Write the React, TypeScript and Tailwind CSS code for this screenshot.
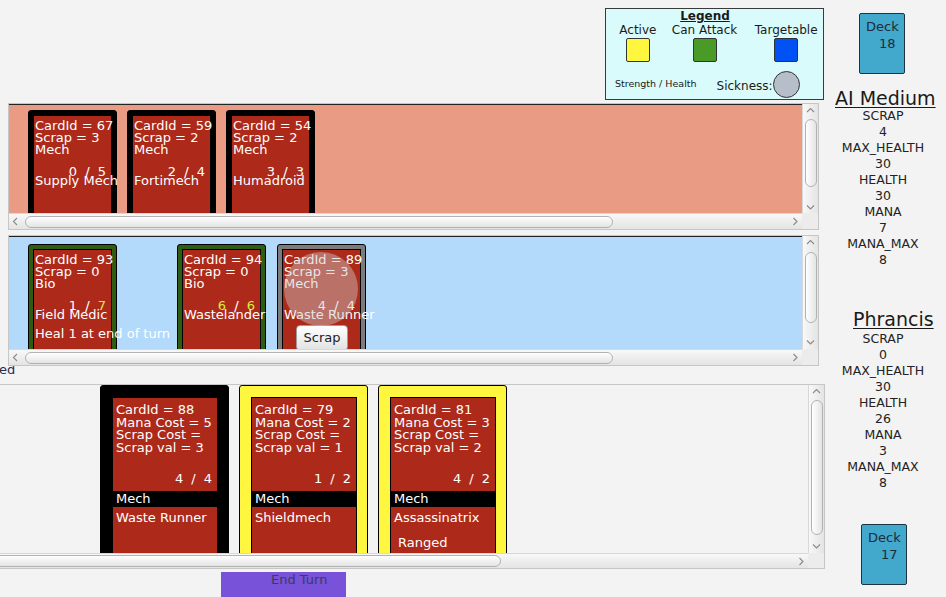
import React from 'react';

type Dir = 'up' | 'down' | 'left' | 'right';

// small gray chevrons used by the scrollbars
const Chevron = ({ dir }: { dir: Dir }) => {
  const vertical = dir === 'up' || dir === 'down';
  const d = {
    up: 'M1 5 L4.5 1.5 L8 5',
    down: 'M1 1.5 L4.5 5 L8 1.5',
    left: 'M5 1 L1.5 4.5 L5 8',
    right: 'M1.5 1 L5 4.5 L1.5 8',
  }[dir];
  return (
    <svg width={vertical ? 9 : 7} height={vertical ? 7 : 9} viewBox={vertical ? '0 0 9 7' : '0 0 7 9'}>
      <path d={d} fill="none" stroke="#8a8a8a" strokeWidth="1.1" />
    </svg>
  );
};

const HScroll = ({ thumb, left = true }: { thumb: string; left?: boolean }) => (
  <div className="flex h-full items-center bg-linear-to-b from-[#f8f8f8] to-[#e4e4e4] border-t border-[#d8d8d8]">
    {left && (
      <div className="w-[13px] shrink-0 flex justify-center">
        <Chevron dir="left" />
      </div>
    )}
    <div className={`h-[12px] shrink-0 rounded-[6px] border border-[#b2b2b2] bg-linear-to-b from-white to-[#e4e4e4] ${thumb}`} />
    <div className="ml-auto w-[14px] shrink-0 flex justify-center">
      <Chevron dir="right" />
    </div>
  </div>
);

const VScroll = ({ thumb, cap }: { thumb: string; cap: string }) => (
  <div className="flex flex-col items-center w-[16px] h-full bg-linear-to-r from-[#f8f8f8] to-[#e4e4e4] border-l border-[#d8d8d8]">
    <div className={`${cap} w-full flex items-center justify-center`}>
      <Chevron dir="up" />
    </div>
    <div className={`w-[12px] rounded-[6px] border border-[#b2b2b2] bg-linear-to-r from-white to-[#e4e4e4] ${thumb}`} />
    <div className={`mt-auto ${cap} w-full flex items-center justify-center`}>
      <Chevron dir="down" />
    </div>
  </div>
);

type BoardCardProps = {
  id: number;
  scrap: number;
  kind: string;
  atk: number;
  hp: number;
  name: string;
  frame: string;
  atkClass?: string;
  hpClass?: string;
  note?: string;
  scrapButton?: boolean;
  faded?: boolean;
  className?: string;
};

const BoardCard = (p: BoardCardProps) => (
  <div className={`relative shrink-0 w-[89px] h-[125px] rounded-[3px] border border-black p-[4px] ${p.frame} ${p.className ?? ''}`}>
    <div className="h-full border border-black bg-[#ad2a1a] pl-[1px] pt-[4px] text-white text-[13px] leading-[12px] whitespace-nowrap">
      <div>CardId = {p.id}</div>
      <div>Scrap = {p.scrap}</div>
      <div>{p.kind}</div>
      <div className="mt-[10px] h-[12px] flex justify-end gap-[8px] pr-[5px]">
        <span className={p.atkClass}>{p.atk}</span>
        <span className="text-[14px]">/</span>
        <span className={p.hpClass}>{p.hp}</span>
      </div>
      <div className="-mt-[3px]">{p.name}</div>
      {p.note && <div className="mt-[7px]">{p.note}</div>}
      {p.scrapButton && (
        <button className="block ml-[12px] mt-[4px] w-[52px] h-[26px] rounded-[4px] border border-[#9c9c9c] bg-linear-to-b from-white to-[#e2e2e2] text-[#222] text-[13px] leading-[24px] text-center">
          Scrap
        </button>
      )}
    </div>
    {p.faded && (
      <div className="absolute left-[6px] top-[7px] w-[74px] h-[74px] rounded-full bg-[rgba(200,200,200,0.45)] pointer-events-none" />
    )}
  </div>
);

type HandCardProps = {
  id: number;
  mana: number;
  scrapVal: number;
  atk: number;
  hp: number;
  kind: string;
  name: string;
  note?: string;
  frame: string;
};

const HandCard = (c: HandCardProps) => (
  <div className={`shrink-0 w-[129px] h-[200px] rounded-[3px] border border-black pt-[11px] pl-[11px] ${c.frame}`}>
    <div className="w-[106px] border border-black bg-black text-white text-[13px] leading-[12.5px] whitespace-nowrap">
      <div className="h-[93px] bg-[#ad2a1a] pl-[3px] pt-[6px]">
        <div>CardId = {c.id}</div>
        <div>Mana Cost = {c.mana}</div>
        <div>Scrap Cost =</div>
        <div>Scrap val = {c.scrapVal}</div>
        <div className="mt-[19px] flex justify-end gap-[8px] pr-[5px]">
          <span>{c.atk}</span>
          <span>/</span>
          <span>{c.hp}</span>
        </div>
      </div>
      <div className="h-[16px] leading-[16px] pl-[3px]">{c.kind}</div>
      <div className="h-[80px] bg-[#ad2a1a] pl-[3px] pt-[3px] leading-[16px]">
        <div>{c.name}</div>
        {c.note && <div className="mt-[9px] pl-[4px]">{c.note}</div>}
      </div>
    </div>
  </div>
);

const Deck = ({ count, className }: { count: number; className: string }) => (
  <div className={`w-[46px] h-[61px] rounded-[2px] border border-[#1d3440] bg-[#42a8cc] pt-[5px] pl-[6px] text-[13px] leading-[16.5px] text-[#1e2c3a] ${className}`}>
    <div>Deck</div>
    <div className="pl-[13px]">{count}</div>
  </div>
);

const Stats = ({ rows, className }: { rows: [string, number][]; className: string }) => (
  <div className={`w-[106px] text-center text-[12.5px] leading-[16px] text-[#222] ${className}`}>
    {rows.map(([k, v]) => (
      <React.Fragment key={k}>
        <div>{k}</div>
        <div>{v}</div>
      </React.Fragment>
    ))}
  </div>
);

const Legend = () => (
  <div className="w-[219px] h-[92px] border border-[#3a3a3a] bg-[#d9fbfb] text-[#1a1a1a] flex flex-col">
    <div className="w-[198px] text-center text-[12px] leading-[14px] font-bold underline">Legend</div>
    <div className="flex text-[12px] leading-[14px]">
      <div className="w-[64px] flex flex-col items-center">
        <span>Active</span>
        <div className="mt-[1px] w-[24px] h-[24px] rounded-[2px] border border-[#333] bg-[#fff640]" />
      </div>
      <div className="w-[70px] flex flex-col items-center">
        <span className="whitespace-nowrap">Can Attack</span>
        <div className="mt-[1px] w-[24px] h-[24px] rounded-[2px] border border-[#333] bg-[#4a9a27]" />
      </div>
      <div className="ml-[10px] w-[74px] flex flex-col items-center">
        <span>Targetable</span>
        <div className="mt-[1px] w-[24px] h-[24px] rounded-[2px] border border-[#333] bg-[#0052f5]" />
      </div>
    </div>
    <div className="mt-[9px] h-[27px] flex items-end">
      <span className="pl-[9px] pb-[9px] text-[9.5px] leading-[11px] whitespace-nowrap">Strength / Health</span>
      <span className="ml-[20px] pb-[5px] text-[12px] leading-[14px]">Sickness:</span>
      <div className="self-start w-[27px] h-[27px] rounded-full border border-[#333] bg-[#b5bec9]" />
    </div>
  </div>
);

const GREEN = 'bg-[#2d5c12]';
const LIME = 'text-[#d4ec3a]';

export default function App() {
  return (
    <div className="flex w-[946px] h-[597px] overflow-hidden bg-[#f3f3f3] font-['DejaVu_Sans',sans-serif]">
      {/* game area */}
      <div className="w-[830px] flex flex-col shrink-0">
        <div className="h-[103px] flex justify-end pt-[8px] pr-[6px]">
          <Legend />
        </div>

        {/* opponent board */}
        <div className="ml-[8px] w-[811px] h-[127px] border border-[#c6c6c6] flex flex-col">
          <div className="flex h-[109px]">
            <div className="w-[793px] h-full border-t border-[#222] bg-[#e99b84] overflow-hidden flex items-start pl-[19px] pt-[5px] gap-[10px]">
              <BoardCard id={67} scrap={3} kind="Mech" atk={0} hp={5} name="Supply Mech" frame="bg-black" />
              <BoardCard id={59} scrap={2} kind="Mech" atk={2} hp={4} name="Fortimech" frame="bg-black" />
              <BoardCard id={54} scrap={2} kind="Mech" atk={3} hp={3} name="Humadroid" frame="bg-black" />
            </div>
            <VScroll cap="h-[12px]" thumb="mt-[3px] h-[68px]" />
          </div>
          <div className="flex h-[16px]">
            <div className="w-[793px]">
              <HScroll thumb="ml-[3px] w-[588px]" />
            </div>
            <div className="w-[16px] bg-[#ececec]" />
          </div>
        </div>

        {/* player board */}
        <div className="mt-[5px] ml-[8px] w-[811px] h-[131px] border border-[#c6c6c6] flex flex-col">
          <div className="flex h-[113px]">
            <div className="w-[793px] h-full border-t border-[#222] bg-[#b3d9fb] overflow-hidden flex items-start pl-[19px] pt-[7px]">
              <BoardCard id={93} scrap={0} kind="Bio" atk={1} hp={7} hpClass={LIME} name="Field Medic" note="Heal 1 at end of turn" frame={GREEN} />
              <BoardCard id={94} scrap={0} kind="Bio" atk={6} hp={6} atkClass={LIME} hpClass={LIME} name="Wastelander" frame={GREEN} className="ml-[60px]" />
              <BoardCard id={89} scrap={3} kind="Mech" atk={4} hp={4} name="Waste Runner" frame="bg-[#7c7c7c]" className="ml-[11px]" scrapButton faded />
            </div>
            <VScroll cap="h-[13px]" thumb="mt-[3px] h-[71px]" />
          </div>
          <div className="flex h-[16px]">
            <div className="w-[793px]">
              <HScroll thumb="ml-[3px] w-[588px]" />
            </div>
            <div className="w-[16px] bg-[#ececec]" />
          </div>
        </div>

        <div className="h-[18px] overflow-hidden">
          <div className="-mt-[3px] -ml-[1px] text-[13px] leading-[14px] text-[#1d2d52]">ed</div>
        </div>

        {/* hand */}
        <div className="-ml-[1px] w-[826px] h-[185px] border border-[#c6c6c6] flex flex-col">
          <div className="flex h-[168px]">
            <div className="w-[808px] h-full overflow-hidden flex items-start pl-[100px] gap-[10px]">
              <HandCard id={88} mana={5} scrapVal={3} atk={4} hp={4} kind="Mech" name="Waste Runner" frame="bg-black" />
              <HandCard id={79} mana={2} scrapVal={1} atk={1} hp={2} kind="Mech" name="Shieldmech" frame="bg-[#fff640]" />
              <HandCard id={81} mana={3} scrapVal={2} atk={4} hp={2} kind="Mech" name="Assassinatrix" note="Ranged" frame="bg-[#fff640]" />
            </div>
            <VScroll cap="h-[13px]" thumb="mt-[2px] h-[135px]" />
          </div>
          <div className="flex h-[15px]">
            <div className="w-[808px]">
              <HScroll left={false} thumb="-ml-[6px] w-[507px]" />
            </div>
            <div className="w-[16px] bg-[#ececec]" />
          </div>
        </div>

        <div className="mt-[3px] ml-[221px] w-[125px] h-[25px] shrink-0 bg-[#7852d8] pl-[50px] text-[13px] leading-[16px] text-[#3b3b5e]">
          End Turn
        </div>
      </div>

      {/* player info column */}
      <div className="w-[116px] shrink-0 flex flex-col pt-[13px]">
        <Deck count={18} className="ml-[29px]" />
        <div className="mt-[15px] ml-[5px] text-[19px] leading-[19px] text-[#1a1a1a] underline underline-offset-[2px] whitespace-nowrap">AI Medium</div>
        <Stats
          className=""
          rows={[['SCRAP', 4], ['MAX_HEALTH', 30], ['HEALTH', 30], ['MANA', 7], ['MANA_MAX', 8]]}
        />
        <div className="mt-[42px] ml-[23px] text-[19px] leading-[19px] text-[#1a1a1a] underline underline-offset-[2px]">Phrancis</div>
        <Stats
          className="mt-[2px]"
          rows={[['SCRAP', 0], ['MAX_HEALTH', 30], ['HEALTH', 26], ['MANA', 3], ['MANA_MAX', 8]]}
        />
        <Deck count={17} className="mt-[33px] ml-[31px]" />
      </div>
    </div>
  );
}
